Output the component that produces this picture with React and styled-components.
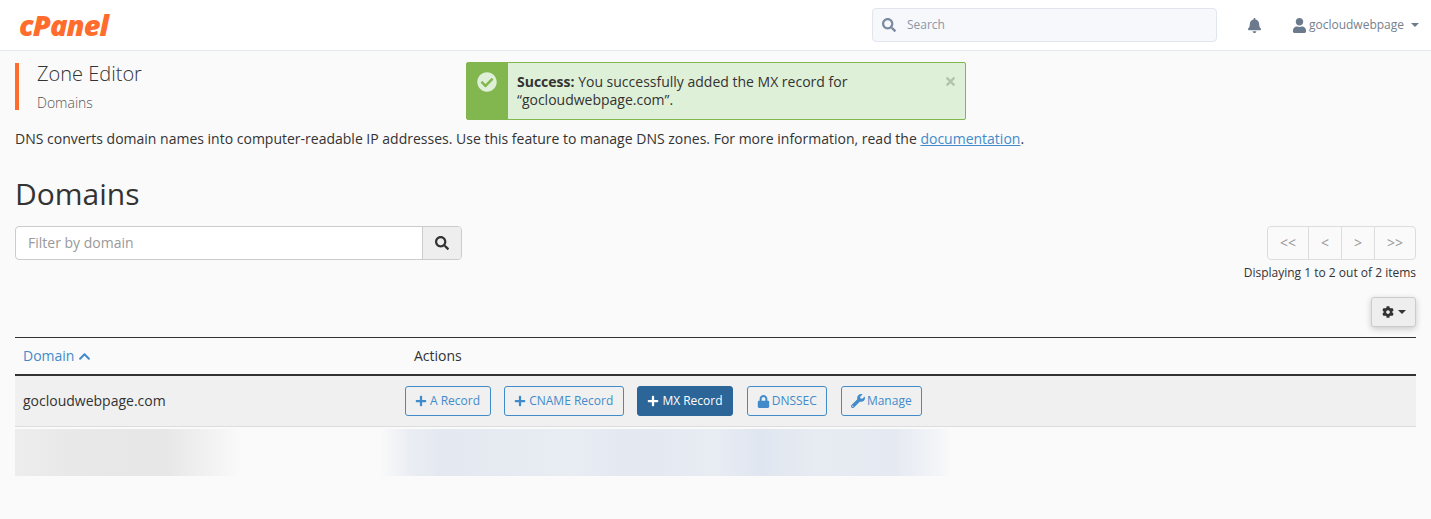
import React from "react"
import styled, { createGlobalStyle } from "styled-components"
import { FaSearch, FaBell, FaUser, FaCheckCircle, FaTimes, FaCog, FaChevronUp, FaPlus, FaLock, FaWrench } from "react-icons/fa"

const GlobalStyle = createGlobalStyle`
  html, body {
    margin: 0;
    padding: 0;
    background: #fafafa;
    color: #333;
    font-family: "Open Sans", sans-serif;
    font-size: 14px;
    line-height: 20px;
  }
`

const TopBar = styled.header`
  height: 50px;
  background: #fff;
  border-bottom: 1px solid #e4e9f0;
  display: flex;
  align-items: center;
  padding: 0 12px 0 19px;
`

const Logo = styled.div`
  font-family: "Open Sans", sans-serif;
  font-weight: 800;
  font-style: italic;
  font-size: 29px;
  line-height: 30px;
  letter-spacing: -0.9px;
  color: #ff6c2c;
`

const SearchBox = styled.div`
  margin-left: auto;
  width: 345px;
  height: 34px;
  box-sizing: border-box;
  background: #f6f8fc;
  border: 1px solid #e0e5ee;
  border-radius: 4px;
  display: flex;
  align-items: center;
  gap: 11px;
  padding-left: 9px;
  color: #8c97a6;
  font-size: 12px;
  svg { color: #7b8a9e; font-size: 14px; }
`

const Bell = styled.div`
  margin-left: 30px;
  display: flex;
  color: #6b7a8c;
  font-size: 15px;
`

const UserMenu = styled.div`
  margin-left: 30px;
  display: flex;
  align-items: center;
  color: #76818e;
  font-size: 12px;
  svg { color: #6b7a8c; font-size: 15px; margin-right: 2px; }
`

const Caret = styled.span`
  display: inline-block;
  width: 0;
  height: 0;
  margin-left: ${({ $gap }) => $gap || 7}px;
  border-top: 4px solid ${({ $color }) => $color || "#6b7a8c"};
  border-left: 4px solid transparent;
  border-right: 4px solid transparent;
`

const Page = styled.main`
  position: relative;
  padding: 12px 15px 0;
`

const TitleBlock = styled.div`
  height: 47px;
  border-left: 4px solid #ff6c2c;
  padding-left: 18px;
`

const Title = styled.h1`
  margin: 0;
  font-size: 20px;
  font-weight: 300;
  line-height: 22px;
  color: #333;
`

const SubTitle = styled.div`
  margin-top: 9px;
  font-size: 14px;
  line-height: 18px;
  font-weight: 300;
  color: #555;
`

const Alert = styled.div`
  position: absolute;
  top: 11px;
  left: 466px;
  width: 500px;
  height: 58px;
  box-sizing: border-box;
  display: flex;
  background: #dff0d8;
  border: 1px solid #82b750;
  border-radius: 2px;
`

const AlertIcon = styled.div`
  width: 41px;
  background: #82b750;
  display: flex;
  justify-content: center;
  padding: 9px 2px 0 0;
  box-sizing: border-box;
  color: #dff0d8;
  font-size: 20px;
`

const AlertText = styled.div`
  flex: 1;
  padding: 10px 0 0 9px;
  line-height: 18px;
  color: #333;
  strong { font-weight: 700; }
`

const AlertClose = styled.div`
  padding: 10px 8px 0 0;
  color: #b3c4ad;
  font-size: 13px;
`

const Intro = styled.p`
  margin: 19px 0 0;
  line-height: 20px;
  a { color: #428bca; text-decoration: underline; }
`

const Heading = styled.h2`
  margin: 27px 0 0;
  font-size: 30px;
  font-weight: 400;
  line-height: 36px;
  color: #333;
`

const ToolRow = styled.div`
  margin-top: 14px;
  display: flex;
  justify-content: space-between;
  align-items: flex-start;
`

const Filter = styled.div`
  width: 447px;
  height: 34px;
  box-sizing: border-box;
  display: flex;
  background: #fff;
  border: 1px solid #ccc;
  border-radius: 4px;
`

const FilterText = styled.div`
  flex: 1;
  padding-left: 12px;
  line-height: 32px;
  color: #999;
`

const FilterButton = styled.div`
  width: 38px;
  display: flex;
  align-items: center;
  justify-content: center;
  background: #eee;
  border-left: 1px solid #ccc;
  border-radius: 0 3px 3px 0;
  color: #333;
  font-size: 14px;
`

const Paging = styled.div`
  display: flex;
  flex-direction: column;
  align-items: flex-end;
`

const PageButtons = styled.div`
  display: flex;
  height: 34px;
  box-sizing: border-box;
  border: 1px solid #ddd;
  border-radius: 4px;
`

const PageButton = styled.div`
  width: ${({ $wide }) => ($wide ? 40 : 32)}px;
  display: flex;
  align-items: center;
  justify-content: center;
  color: #999;
  font-size: 14px;
  & + & { border-left: 1px solid #ddd; }
`

const PageInfo = styled.div`
  margin-top: 3px;
  font-size: 12px;
  line-height: 20px;
  color: #333;
`

const SettingsRow = styled.div`
  display: flex;
  justify-content: flex-end;
  margin-top: 14px;
`

const SettingsButton = styled.div`
  width: 45px;
  height: 30px;
  box-sizing: border-box;
  display: flex;
  align-items: center;
  justify-content: center;
  background: #eee;
  border: 1px solid #ccc;
  border-radius: 3px;
  box-shadow: 0 2px 6px rgba(0, 0, 0, 0.2);
  color: #333;
  font-size: 12px;
`

const Table = styled.div`
  margin-top: 10px;
  border-top: 1px solid #333;
`

const HeadRow = styled.div`
  display: grid;
  grid-template-columns: 399px 1fr;
  height: 36px;
  align-items: center;
  border-bottom: 2px solid #333;
`

const SortLink = styled.div`
  padding-left: 8px;
  display: flex;
  align-items: center;
  gap: 4px;
  color: #428bca;
  svg { font-size: 13px; }
`

const BodyRow = styled.div`
  display: grid;
  grid-template-columns: 390px 1fr;
  height: 50px;
  align-items: center;
  background: #f0f0f0;
  border-bottom: 1px solid #ddd;
`

const DomainCell = styled.div`
  padding-left: 8px;
  color: #333;
`

const Actions = styled.div`
  display: flex;
  gap: 13.6px;
`

const ActionButton = styled.div`
  height: 30px;
  box-sizing: border-box;
  display: flex;
  align-items: center;
  padding: 0 9.5px 0 9px;
  border: 1px solid ${({ $primary }) => ($primary ? "#2c6699" : "#428bca")};
  border-radius: 3px;
  background: ${({ $primary }) => ($primary ? "#2c6699" : "transparent")};
  color: ${({ $primary }) => ($primary ? "#fff" : "#428bca")};
  font-size: 12px;
  white-space: nowrap;
  svg {
    font-size: ${({ $icon }) => $icon || 12}px;
    margin-right: ${({ $icon }) => ($icon ? 2 : 3)}px;
  }
`

const BlurRow = styled.div`
  height: 47px;
  margin-top: 2px;
  background:
    linear-gradient(90deg, transparent 365px, #eaedf3 395px, #e4e9f1 425px, #e8ecf3 560px, #e3e8f1 620px, #e8ecf3 700px, #e0e6f0 745px, #e7ebf2 800px, #e5eaf2 880px, #f4f5f8 925px, transparent 935px),
    linear-gradient(90deg, #ededed 0, #e8e8e8 60px, #e7e7e7 150px, #f2f2f2 195px, transparent 226px);
`

const App = () => (
  <>
    <GlobalStyle />
    <TopBar>
      <Logo>cPanel</Logo>
      <SearchBox><FaSearch />Search</SearchBox>
      <Bell><FaBell /></Bell>
      <UserMenu><FaUser />gocloudwebpage<Caret /></UserMenu>
    </TopBar>
    <Page>
      <TitleBlock>
        <Title>Zone Editor</Title>
        <SubTitle>Domains</SubTitle>
      </TitleBlock>

      <Alert>
        <AlertIcon><FaCheckCircle /></AlertIcon>
        <AlertText><strong>Success:</strong> You successfully added the MX record for “gocloudwebpage.com”.</AlertText>
        <AlertClose><FaTimes /></AlertClose>
      </Alert>

      <Intro>
        DNS converts domain names into computer-readable IP addresses. Use this feature to manage DNS zones. For more information, read the <a href="#docs">documentation</a>.
      </Intro>

      <Heading>Domains</Heading>

      <ToolRow>
        <Filter>
          <FilterText>Filter by domain</FilterText>
          <FilterButton><FaSearch /></FilterButton>
        </Filter>
        <Paging>
          <PageButtons>
            <PageButton $wide>&lt;&lt;</PageButton>
            <PageButton>&lt;</PageButton>
            <PageButton>&gt;</PageButton>
            <PageButton $wide>&gt;&gt;</PageButton>
          </PageButtons>
          <PageInfo>Displaying 1 to 2 out of 2 items</PageInfo>
        </Paging>
      </ToolRow>

      <SettingsRow>
        <SettingsButton><FaCog /><Caret $gap={4} $color="#333" /></SettingsButton>
      </SettingsRow>

      <Table>
        <HeadRow>
          <SortLink>Domain <FaChevronUp /></SortLink>
          <div>Actions</div>
        </HeadRow>
        <BodyRow>
          <DomainCell>gocloudwebpage.com</DomainCell>
          <Actions>
            <ActionButton><FaPlus />A Record</ActionButton>
            <ActionButton><FaPlus />CNAME Record</ActionButton>
            <ActionButton $primary><FaPlus />MX Record</ActionButton>
            <ActionButton $icon={13}><FaLock />DNSSEC</ActionButton>
            <ActionButton $icon={14}><FaWrench />Manage</ActionButton>
          </Actions>
        </BodyRow>
        <BlurRow />
      </Table>
    </Page>
  </>
)

export default App
